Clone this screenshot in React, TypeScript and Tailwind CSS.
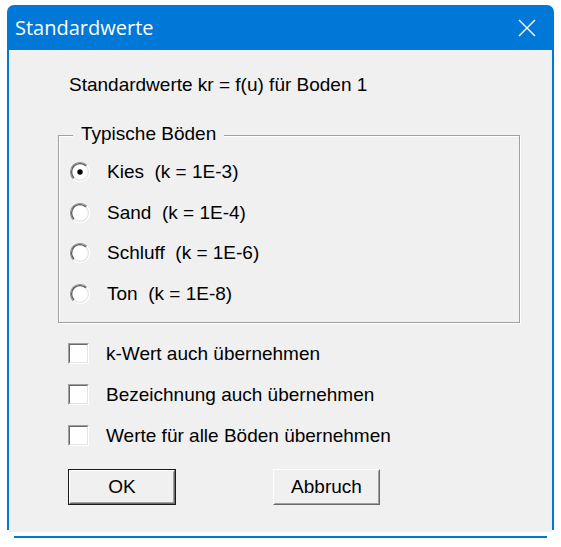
import React from "react";

function Radio({ checked }: { checked?: boolean }) {
  return (
    <svg width="20" height="20" viewBox="0 0 20 20" className="shrink-0">
      <circle cx="10" cy="10" r="8.5" fill="#ffffff" />
      <path d="M3.28 16.72 A9.5 9.5 0 0 1 16.72 3.28" fill="none" stroke="#9a9a9a" strokeWidth="1.2" />
      <path d="M16.72 3.28 A9.5 9.5 0 0 1 3.28 16.72" fill="none" stroke="#ffffff" strokeWidth="1.2" />
      <path d="M4.06 15.94 A8.4 8.4 0 0 1 15.94 4.06" fill="none" stroke="#5a5a5a" strokeWidth="1.3" />
      <path d="M15.94 4.06 A8.4 8.4 0 0 1 4.06 15.94" fill="none" stroke="#e3e3e3" strokeWidth="1.2" />
      {checked && <circle cx="10" cy="10" r="2.7" fill="#000" />}
    </svg>
  );
}

function Check() {
  return (
    <div className="w-[21px] h-[21px] shrink-0 border border-t-[#a0a0a0] border-l-[#a0a0a0] border-b-white border-r-white">
      <div className="w-full h-full bg-white border border-t-[#696969] border-l-[#696969] border-b-[#e3e3e3] border-r-[#e3e3e3]" />
    </div>
  );
}

function Btn({ label, def, w }: { label: string; def?: boolean; w: string }) {
  const inner = (
    <div className="h-full border border-t-white border-l-white border-b-[#696969] border-r-[#696969]">
      <div className="h-full flex items-center justify-center border border-t-[#f0f0f0] border-l-[#f0f0f0] border-b-[#a0a0a0] border-r-[#a0a0a0] bg-[#f0f0f0]">
        {label}
      </div>
    </div>
  );
  return (
    <div className={`${w} h-[36px] ${def ? "border border-[#1a1a1a]" : ""}`}>{inner}</div>
  );
}

export default function App() {
  const radios = [
    { t: "Kies  (k = 1E-3)", c: true },
    { t: "Sand  (k = 1E-4)" },
    { t: "Schluff  (k = 1E-6)" },
    { t: "Ton  (k = 1E-8)" },
  ];
  const checks = [
    "k-Wert auch übernehmen",
    "Bezeichnung auch übernehmen",
    "Werte für alle Böden übernehmen",
  ];
  return (
    <div className="w-[561px] h-[547px] bg-white pt-[5px] pl-[7px]">
      <div className="w-[547px]">
        <div className="h-[45px] bg-[#0078d7] rounded-t-[7px] flex items-center justify-between pl-[8px] pr-[18px] text-white font-['Open_Sans',sans-serif] text-[20px]">
          <span className="leading-none">Standardwerte</span>
          <svg width="18" height="18" viewBox="0 0 18 18">
            <path d="M1 1 L17 17 M17 1 L1 17" stroke="#ffffff" strokeWidth="1.4" fill="none" />
          </svg>
        </div>
        <div className="h-[480px] flex flex-col border-l-2 border-r-2 border-[#0078d7] bg-[#f0f0f0] pt-[24px] pl-[49px] text-black font-['Liberation_Sans',Arial,sans-serif] text-[19px] leading-[22px] whitespace-pre">
          <div className="pl-[11px]">Standardwerte kr = f(u) für Boden 1</div>
          <div className="relative mt-[39px] w-[462px] h-[188px] border border-[#a0a0a0] shadow-[inset_1px_1px_0_#ffffff,1px_1px_0_#ffffff]">
            <span className="absolute left-[14px] top-[-13px] px-[8px] bg-[#f0f0f0]">Typische Böden</span>
            <div className="pt-[16px] pl-[11px]">
              {radios.map((r) => (
                <div key={r.t} className="h-[40.5px] flex items-center gap-[17px]">
                  <Radio checked={r.c} />
                  <span>{r.t}</span>
                </div>
              ))}
            </div>
          </div>
          <div className="mt-[10px] pl-[10px]">
            {checks.map((c) => (
              <div key={c} className="h-[41px] flex items-center gap-[17px]">
                <Check />
                <span>{c}</span>
              </div>
            ))}
          </div>
          <div className="mt-[13px] pl-[10px] flex gap-[97px]">
            <Btn label="OK" def w="w-[108px]" />
            <Btn label="Abbruch" w="w-[107px]" />
          </div>
        </div>
        <div className="ml-[2px] w-[543px] h-[2px] bg-[#f0f0f0]" />
        <div className="mt-[4px] ml-[7px] w-[533px] h-[2px] bg-[#0078d7]" />
      </div>
    </div>
  );
}
